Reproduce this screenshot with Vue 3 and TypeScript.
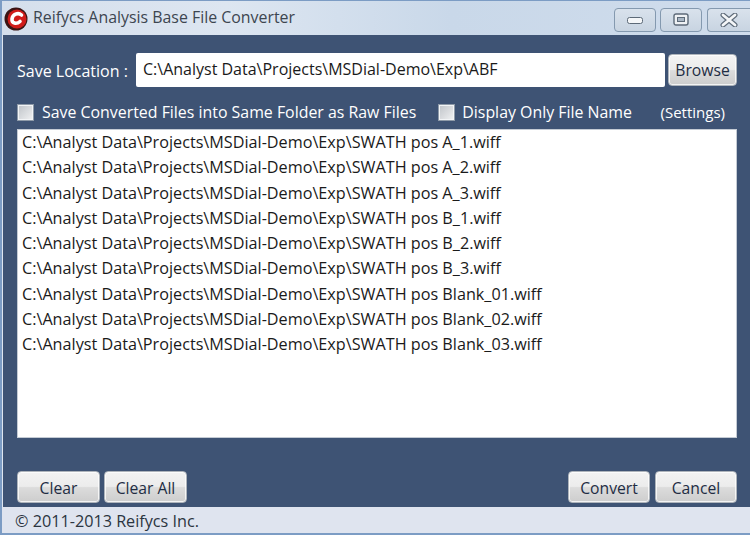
<script setup lang="ts">
const files: string[] = [
  'SWATH pos A_1.wiff',
  'SWATH pos A_2.wiff',
  'SWATH pos A_3.wiff',
  'SWATH pos B_1.wiff',
  'SWATH pos B_2.wiff',
  'SWATH pos B_3.wiff',
  'SWATH pos Blank_01.wiff',
  'SWATH pos Blank_02.wiff',
  'SWATH pos Blank_03.wiff',
].map((f) => 'C:\\Analyst Data\\Projects\\MSDial-Demo\\Exp\\' + f)
</script>

<template>
  <div class="window">
    <header class="titlebar">
      <svg class="logo" width="24" height="24" viewBox="0 0 24 24">
        <circle cx="12" cy="12" r="11.5" fill="#3a1413" />
        <circle cx="13" cy="12" r="9.5" fill="#d01c1a" />
        <path d="M17.5 8 C14 5 8.5 7.5 8 12 C7.6 16.5 12.5 17.5 16 14.5" fill="none" stroke="#fff" stroke-width="3.6" stroke-linecap="round" />
      </svg>
      <span class="title">Reifycs Analysis Base File Converter</span>
      <div class="win-btns">
        <div class="win-btn">
          <svg width="18" height="10" viewBox="0 0 18 10"><rect x="1.5" y="2.5" width="15" height="6" rx="2" fill="#f4f6f8" stroke="#5d6a78" /></svg>
        </div>
        <div class="win-btn">
          <svg width="16" height="13" viewBox="0 0 16 13"><rect x="1" y="1" width="14" height="11" rx="2" fill="#eef1f4" stroke="#5d6a78" stroke-width="1.4" /><rect x="4.5" y="4.5" width="7" height="4" fill="#a9b6c4" stroke="#5d6a78" /></svg>
        </div>
        <div class="win-btn">
          <svg width="18" height="14" viewBox="0 0 18 14"><path d="M3 2 L15 12 M15 2 L3 12" stroke="#5d6a78" stroke-width="5" stroke-linecap="round" /><path d="M3 2 L15 12 M15 2 L3 12" stroke="#f4f6f8" stroke-width="2.8" stroke-linecap="round" /></svg>
        </div>
      </div>
    </header>

    <main class="body">
      <div class="save-row">
        <label class="save-label">Save Location :</label>
        <div class="path-input">C:\Analyst Data\Projects\MSDial-Demo\Exp\ABF</div>
        <button class="btn browse">Browse</button>
      </div>

      <div class="options">
        <span class="check-box first"></span>
        <span class="opt-text">Save Converted Files into Same Folder as Raw Files</span>
        <span class="check-box second"></span>
        <span class="opt-text">Display Only File Name</span>
        <span class="settings">(Settings)</span>
      </div>

      <ul class="files">
        <li v-for="f in files" :key="f">{{ f }}</li>
      </ul>

      <div class="actions">
        <button class="btn wide">Clear</button>
        <button class="btn wide">Clear All</button>
        <span class="spacer"></span>
        <button class="btn">Convert</button>
        <button class="btn">Cancel</button>
      </div>
    </main>

    <footer class="status">© 2011-2013 Reifycs Inc.</footer>
  </div>
</template>

<style>
html, body { margin: 0; background: #7c9cc4; }
</style>

<style scoped>
.window {
  width: 750px; height: 535px; box-sizing: border-box;
  display: flex; flex-direction: column;
  font-family: "Open Sans", "Noto Sans", sans-serif; font-size: 16px;
  background: #dfe6f0; overflow: hidden;
  border: 2px solid #7c9cc4; border-top-width: 1px; border-right-width: 0;
}
.titlebar {
  height: 34px; flex: none; display: flex; align-items: center;
  padding-left: 2px; box-sizing: border-box;
  background: linear-gradient(90deg, #d5dfec 0%, #dde6f1 30%, #c9d8e9 60%, #cfdcec 100%);
}
.logo { flex: none; margin-top: 1px; }
.title { margin-left: 5px; color: #3d4650; font-size: 15.9px; margin-top: -3px; }
.win-btns { margin-left: auto; display: flex; gap: 4px; margin-top: 3px; }
.win-btn {
  width: 42px; height: 24px; box-sizing: border-box;
  display: flex; align-items: center; justify-content: center;
  border: 1px solid #8499af; border-radius: 4px;
  background: linear-gradient(#d9e2ec, #c8d4e1);
}
.win-btn:last-child { width: 43px; margin-left: 1px; border-right: none; border-radius: 4px 0 0 4px; }
.body {
  flex: 1; min-height: 0; display: flex; flex-direction: column;
  background: #3e5374; padding: 0 13px 0 14px;
  margin: 0 0 0 1px;
}
.save-row { display: flex; align-items: center; margin-top: 18px; height: 34px; }
.save-label { color: #fff; width: 119px; flex: none; padding-top: 1px; }
.path-input {
  width: 529px; height: 34px; box-sizing: border-box; flex: none;
  background: #fff; border-radius: 2px; padding: 0 0 2px 7px;
  display: flex; align-items: center; color: #1a1a1a;
}
.btn {
  height: 32px; width: 82px; box-sizing: border-box; padding: 1px 0 0;
  font: inherit; font-size: 15.7px; color: #1f2d44; cursor: default;
  border: 1px solid #aeb4bb; border-radius: 4px;
  background: linear-gradient(#f3f3f3 0%, #ececec 48%, #dcdcdc 52%, #cdcdcd 100%);
  box-shadow: inset 0 0 0 1px rgba(255, 255, 255, 0.75);
}
.wide { width: 83px; }
.browse { width: 69px; margin-left: 3px; padding-top: 0; }
.options {
  display: flex; align-items: center; margin-top: 10px; height: 32px;
  box-sizing: border-box; padding-bottom: 2px; color: #fff; font-size: 15.9px;
}
.check-box {
  width: 17px; height: 17px; box-sizing: border-box; flex: none;
  border: 1px solid #8e9aa8; background: linear-gradient(135deg, #bfc3c8, #f1f2f3);
  box-shadow: inset 0 0 0 1px #f2f4f6;
}
.first { margin-left: 0; margin-right: 8px; }
.second { margin-left: 22px; margin-right: 7px; }
.settings { margin-left: auto; margin-right: 12px; font-size: 15px; }
.files {
  list-style: none; margin: 0; padding: 0 0 0 4px; height: 309px;
  box-sizing: border-box; background: #fff; flex: none;
  border: 1px solid #c4cbd4; color: #1a1a1a; font-size: 16.2px;
}
.files li { height: 25.3px; line-height: 25px; white-space: nowrap; }
.actions { display: flex; gap: 4px; margin-top: 33px; }
.actions .btn:last-child { margin-left: 1px; }
.spacer { flex: 1; }
.status {
  height: 26px; flex: none; box-sizing: border-box; background: #dfe4ef; color: #2b3440;
  padding: 2px 0 0 13px; display: flex; align-items: center; font-size: 16.2px;
}
</style>
